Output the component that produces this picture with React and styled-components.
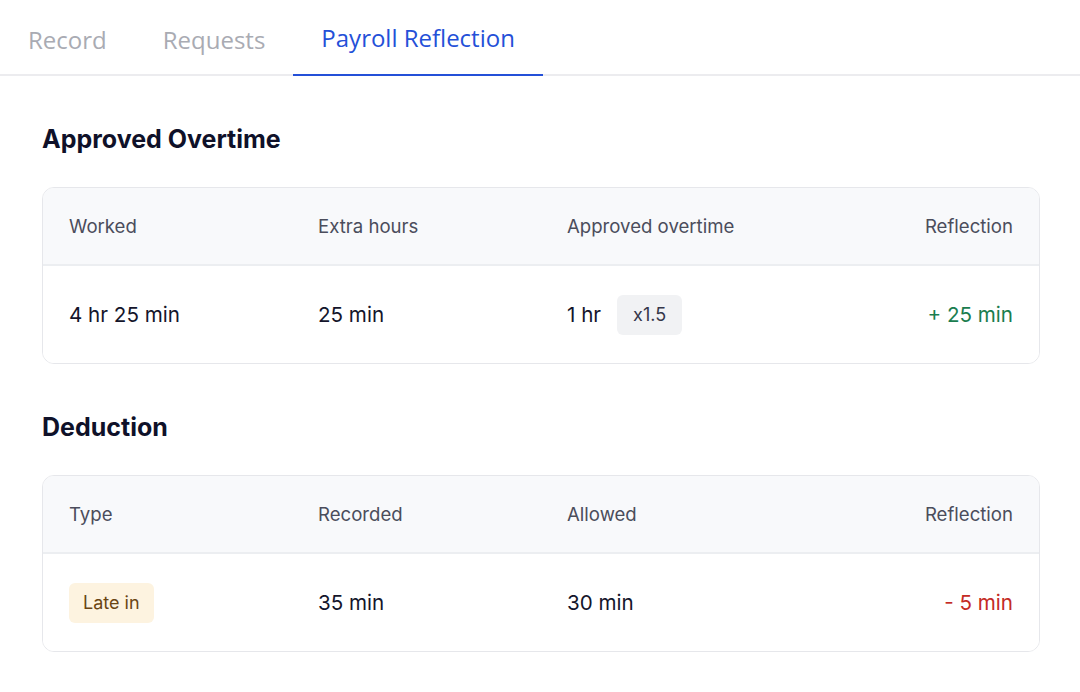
import React from "react";
import styled, { createGlobalStyle } from "styled-components";

const Global = createGlobalStyle`
  html, body { margin: 0; padding: 0; background: #ffffff; }
  body { font-family: Inter, "Noto Sans", sans-serif; color: #14152b; }
`;

const Page = styled.div`
  width: 1080px;
  min-height: 692px;
  background: #fff;
`;

const TabBar = styled.div`
  display: flex;
  border-bottom: 2px solid #ececef;
  height: 76px;
  box-sizing: border-box;
`;

const Tab = styled.div`
  padding: 0 28px;
  height: 76px;
  box-sizing: border-box;
  display: flex;
  align-items: center;
  font-family: "Open Sans", "Noto Sans", sans-serif;
  font-size: 24px;
  color: ${(p) => (p.$active ? "#2450d8" : "#a9abb3")};
  border-bottom: 2px solid ${(p) => (p.$active ? "#2450d8" : "transparent")};
  margin-bottom: -2px;
  padding-top: ${(p) => (p.$active ? "0" : "4px")};
`;

const Content = styled.div`
  padding: 0 40px 0 42px;
`;

const Heading = styled.h2`
  margin: 47px 0 32px;
  font-size: 25px;
  line-height: 32px;
  font-weight: 700;
  color: #0f1129;
`;

const Card = styled.div`
  border: 1px solid #e6e7eb;
  border-radius: 12px;
  overflow: hidden;
`;

const Row = styled.div`
  display: grid;
  grid-template-columns: repeat(4, 1fr);
  align-items: center;
  height: ${(p) => (p.$head ? "78px" : "97px")};
  background: ${(p) => (p.$head ? "#f8f9fb" : "#fff")};
  border-bottom: ${(p) => (p.$head ? "2px solid #eceef1" : "none")};
  box-sizing: border-box;
`;

const HeadCell = styled.div`
  padding: 0 26px;
  font-size: 18.6px;
  color: #4b4d5c;
  text-align: ${(p) => (p.$right ? "right" : "left")};
`;

const Cell = styled.div`
  padding: 0 26px;
  font-size: 20.6px;
  color: ${(p) =>
    p.$tone === "pos" ? "#1b7d4f" : p.$tone === "neg" ? "#c42b25" : "#14152b"};
  display: flex;
  align-items: center;
  justify-content: ${(p) => (p.$right ? "flex-end" : "flex-start")};
  gap: 16px;
`;

const Badge = styled.span`
  display: inline-flex;
  align-items: center;
  height: 40px;
  padding: 0 ${(p) => (p.$kind === "late" ? "14px" : "16px")};
  border-radius: 6px;
  font-size: 18px;
  background: ${(p) => (p.$kind === "late" ? "#fdf3e0" : "#f1f2f4")};
  color: ${(p) => (p.$kind === "late" ? "#6a4513" : "#35374a")};
`;

export default function App() {
  return (
    <Page>
      <Global />
      <TabBar>
        <Tab>Record</Tab>
        <Tab>Requests</Tab>
        <Tab $active>Payroll Reflection</Tab>
      </TabBar>
      <Content>
        <Heading>Approved Overtime</Heading>
        <Card>
          <Row $head>
            <HeadCell>Worked</HeadCell>
            <HeadCell>Extra hours</HeadCell>
            <HeadCell>Approved overtime</HeadCell>
            <HeadCell $right>Reflection</HeadCell>
          </Row>
          <Row>
            <Cell>4 hr 25 min</Cell>
            <Cell>25 min</Cell>
            <Cell>
              1 hr <Badge>x1.5</Badge>
            </Cell>
            <Cell $right $tone="pos">+ 25 min</Cell>
          </Row>
        </Card>
        <Heading>Deduction</Heading>
        <Card>
          <Row $head>
            <HeadCell>Type</HeadCell>
            <HeadCell>Recorded</HeadCell>
            <HeadCell>Allowed</HeadCell>
            <HeadCell $right>Reflection</HeadCell>
          </Row>
          <Row>
            <Cell>
              <Badge $kind="late">Late in</Badge>
            </Cell>
            <Cell>35 min</Cell>
            <Cell>30 min</Cell>
            <Cell $right $tone="neg">- 5 min</Cell>
          </Row>
        </Card>
      </Content>
    </Page>
  );
}
